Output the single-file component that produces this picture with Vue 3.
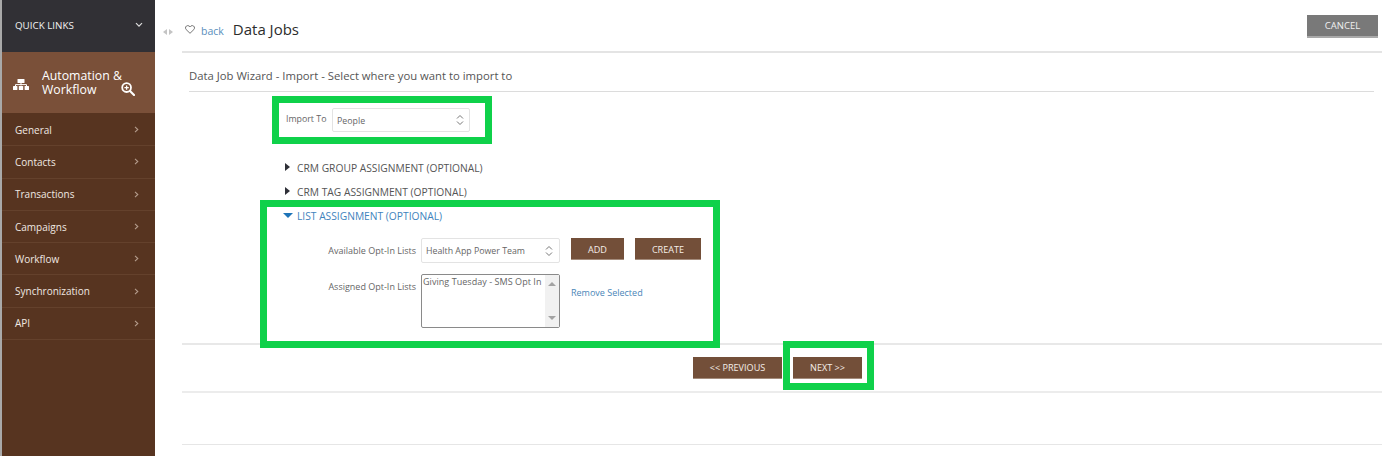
<script setup>
const menu = ['General', 'Contacts', 'Transactions', 'Campaigns', 'Workflow', 'Synchronization', 'API']
const closedSections = ['CRM GROUP ASSIGNMENT (OPTIONAL)', 'CRM TAG ASSIGNMENT (OPTIONAL)']
</script>

<template>
  <div class="page">
    <aside class="sidebar">
      <div class="quick">
        <span>QUICK LINKS</span>
        <svg class="chev-down" width="8" height="6" viewBox="0 0 8 6"><path d="M1 1.2 4 4.2 7 1.2" fill="none" stroke="#ddd" stroke-width="1.2"/></svg>
      </div>
      <div class="module">
        <svg class="org" width="16" height="11" viewBox="0 0 16 11">
          <rect x="4.5" y="0" width="7" height="4" rx=".6" fill="#fff"/>
          <path d="M8 4v2.5M2.5 7V5.6h11V7" fill="none" stroke="#fff" stroke-width="1"/>
          <rect x="0" y="7" width="4.4" height="4" rx=".6" fill="#fff"/>
          <rect x="5.8" y="7" width="4.4" height="4" rx=".6" fill="#fff"/>
          <rect x="11.6" y="7" width="4.4" height="4" rx=".6" fill="#fff"/>
        </svg>
        <span class="module-name">Automation &amp; Workflow</span>
        <svg class="zoom-ic" width="14" height="14" viewBox="0 0 14 14">
          <circle cx="5.6" cy="5.6" r="4.4" fill="none" stroke="#fff" stroke-width="1.8"/>
          <path d="M9 9 13 13" stroke="#fff" stroke-width="2.2" stroke-linecap="round"/>
          <path d="M3.4 5.6h4.4M5.6 3.4v4.4" stroke="#fff" stroke-width="1.3"/>
        </svg>
      </div>
      <nav class="menu">
        <div v-for="m in menu" :key="m" class="menu-item">
          <span>{{ m }}</span>
          <svg width="5" height="7" viewBox="0 0 5 7"><path d="M1 .8 3.8 3.5 1 6.2" fill="none" stroke="#b49c8c" stroke-width="1.1"/></svg>
        </div>
      </nav>
    </aside>

    <main class="main">
      <div class="toggle">
        <span class="tri-l"></span><span class="tri-r"></span>
      </div>
      <div class="content">
        <header class="head">
          <svg class="heart" width="10" height="9" viewBox="0 0 10 9"><path d="M5 8.3 1.1 4.5C-.3 3 .8.6 2.7.6 3.7.6 4.5 1.1 5 1.9 5.5 1.1 6.3.6 7.3.6c1.9 0 3 2.400 1.600 3.900Z" fill="none" stroke="#666" stroke-width=".9"/></svg>
          <a class="back">back</a>
          <h1>Data Jobs</h1>
          <button class="cancel">CANCEL</button>
        </header>

        <section class="wizard">
          <h2>Data Job Wizard - Import - Select where you want to import to</h2>
          <div class="import-row">
            <label>Import To</label>
            <div class="select import-select">
              <span>People</span>
              <svg width="8" height="12" viewBox="0 0 8 12"><path d="M1 4.500 4 1.500 7 4.500M1 7.500 4 10.500 7 7.500" fill="none" stroke="#777" stroke-width="1"/></svg>
            </div>
          </div>

          <div class="sections">
            <div v-for="s in closedSections" :key="s" class="sec-title">
              <span class="tri-closed"></span>{{ s }}
            </div>
            <div class="sec-title open">
              <span class="tri-open"></span>LIST ASSIGNMENT (OPTIONAL)
            </div>
            <div class="list-grid">
              <label>Available Opt-In Lists</label>
              <div class="select list-select">
                <span>Health App Power Team</span>
                <svg width="8" height="12" viewBox="0 0 8 12"><path d="M1 4.500 4 1.500 7 4.500M1 7.500 4 10.500 7 7.500" fill="none" stroke="#777" stroke-width="1"/></svg>
              </div>
              <div class="actions">
                <button class="btn add">ADD</button>
                <button class="btn create">CREATE</button>
              </div>
              <label class="assigned-label">Assigned Opt-In Lists</label>
              <div class="listbox">
                <div class="listbox-text">Giving Tuesday - SMS Opt In</div>
                <div class="scroll">
                  <span class="s-up"></span>
                  <span class="s-down"></span>
                </div>
              </div>
              <a class="remove">Remove Selected</a>
            </div>
          </div>
        </section>

        <div class="footer">
          <button class="btn prev">&lt;&lt; PREVIOUS</button>
          <button class="btn next">NEXT &gt;&gt;</button>
        </div>
        <div class="spacer"></div>
      </div>
    </main>

    <div class="mark mark-import"></div>
    <div class="mark mark-list"></div>
    <div class="mark mark-next"></div>
  </div>
</template>

<style>
html, body { margin: 0; background: #fff; overflow: hidden; }
</style>

<style scoped>
.page {
  position: relative;
  display: flex;
  width: 1391px;
  height: 456px;
  overflow: hidden;
  font-family: "Open Sans", "Liberation Sans", sans-serif;
  color: #555;
  background: #fff;
}
.sidebar {
  width: 153px;
  flex: none;
  border-left: 2px solid #a9a9a9;
  background: #573420;
  color: #efe6df;
}
.quick {
  height: 52px;
  display: flex;
  align-items: center;
  justify-content: space-between;
  padding: 0 12px 2px 13px;
  box-sizing: border-box;
  background: #313035;
  font-size: 9.800px;
  color: #f2f2f2;
}
.module {
  height: 61px;
  display: flex;
  align-items: center;
  background: #7a5039;
  color: #fff;
  padding-left: 11px;
  box-sizing: border-box;
  position: relative;
}
.org { flex: none; margin-top: 4px; }
.module-name {
  width: 90px;
  margin-left: 13px;
  font-size: 12.300px;
  line-height: 14.500px;
  margin-top: 1px;
}
.zoom-ic { position: absolute; left: 119px; top: 30px; }
.menu { padding-top: 1px; }
.menu-item {
  height: 32.300px;
  box-sizing: border-box;
  display: flex;
  align-items: center;
  justify-content: space-between;
  padding: 0 16px 0 13px;
  font-size: 10px;
  font-weight: 400;
  color: #f0e8e2;
  border-bottom: 1px solid #64412c;
}
.main { flex: 1; display: flex; min-width: 0; }
.toggle {
  width: 27px;
  flex: none;
  box-sizing: border-box;
  padding: 29px 0 0 8px;
  display: flex;
  gap: 2px;
  align-items: flex-start;
}
.tri-l, .tri-r {
  width: 0;
  height: 0;
  border-top: 3px solid transparent;
  border-bottom: 3px solid transparent;
}
.tri-l { border-right: 4px solid #c4c4c4; }
.tri-r { border-left: 4px solid #c4c4c4; }
.content { width: 1200px; flex: none; }
.head {
  height: 53px;
  box-sizing: border-box;
  display: flex;
  align-items: center;
  padding: 7px 4px 0 3px;
  border-bottom: 2px solid #e4e4e4;
}
.heart { flex: none; }
.back {
  margin-left: 6px;
  font-size: 10.500px;
  color: #5a8fbd;
  padding-top: 3px;
}
h1 {
  margin: 0 0 0 9px;
  font-size: 15px;
  font-weight: 500;
  color: #2c2c2c;
}
.cancel {
  margin-left: auto;
  margin-top: -6px;
  width: 71px;
  height: 23px;
  border: 0;
  border-bottom: 2px solid #a9a9a9;
  background: #797979;
  color: #f0f0f0;
  font: 9.500px "Open Sans", sans-serif;
  padding: 1px 0 0;
}
.wizard {
  padding: 0 8px 0 7px;
  height: 292px;
  box-sizing: border-box;
  border-bottom: 2px solid #e8e8e8;
}
h2 {
  margin: 0;
  height: 39px;
  box-sizing: border-box;
  padding-top: 15px;
  line-height: 16px;
  font-size: 11.300px;
  font-weight: 400;
  color: #555;
  border-bottom: 1px solid #dcdcdc;
}
.import-row {
  display: flex;
  align-items: center;
  margin: 16px 0 0 97px;
  font-size: 8.800px;
  color: #666;
}
.import-row label { width: 46px; margin-top: -2px; }
.select {
  box-sizing: border-box;
  display: flex;
  align-items: center;
  justify-content: space-between;
  border: 1px solid #e3e3e3;
  border-radius: 2px;
  font-size: 8.800px;
  color: #666;
  padding: 0 5px 0 4px;
}
.select span { padding-top: 1px; }
.import-select { width: 138px; height: 24px; }
.sections { margin: 24px 0 0 96px; }
.sec-title {
  position: relative;
  height: 24px;
  line-height: 24px;
  padding-left: 12px;
  font-size: 10.250px;
  color: #555;
}
.sec-title.open { color: #3f83bd; }
.tri-closed {
  position: absolute;
  left: 0;
  top: 7px;
  border-top: 4px solid transparent;
  border-bottom: 4px solid transparent;
  border-left: 5px solid #2f3038;
}
.tri-open {
  position: absolute;
  left: -2px;
  top: 9px;
  border-left: 5px solid transparent;
  border-right: 5px solid transparent;
  border-top: 5px solid #1e74b8;
}
.list-grid {
  display: grid;
  grid-template-columns: 136px 139px auto;
  grid-template-rows: 25px 54px;
  row-gap: 11px;
  margin-top: 10px;
  font-size: 9px;
  color: #666;
}
.list-grid label {
  text-align: right;
  padding-right: 5px;
  line-height: 26px;
}
.list-grid .assigned-label { line-height: 26px; }
.list-select { width: 139px; height: 25px; padding: 0 6px 0 4px; }
.actions { display: flex; gap: 11px; margin-left: 11px; }
.btn {
  border: 0;
  padding: 1px 0 0;
  background: #734f39;
  color: #f5eee9;
  font: 400 9.100px "Open Sans", sans-serif;
  height: 22px;
  border-bottom: 1px solid #a48c7c;
}
.add { width: 53px; }
.create { width: 66px; }
.listbox {
  box-sizing: border-box;
  display: flex;
  height: 54px;
  border: 1px solid #8a8a8a;
  border-radius: 2px;
  background: #fff;
}
.listbox-text {
  flex: 1;
  padding: 0 1px;
  line-height: 13px;
  font-size: 9px;
  letter-spacing: .05px;
  color: #666;
  white-space: nowrap;
}
.scroll {
  width: 14px;
  background: #f1f1f1;
  position: relative;
}
.s-up, .s-down {
  position: absolute;
  left: 3px;
  border-left: 4px solid transparent;
  border-right: 4px solid transparent;
}
.s-up { top: 7px; border-bottom: 4px solid #a3a3a3; }
.s-down { bottom: 7px; border-top: 4px solid #a3a3a3; }
.remove {
  margin: 12px 0 0 11px;
  color: #4a86b8;
  font-size: 9px;
}
.footer {
  height: 48px;
  box-sizing: border-box;
  display: flex;
  justify-content: center;
  gap: 11px;
  padding-top: 12px;
  padding-right: 9px;
  border-bottom: 2px solid #ececec;
}
.prev, .next { padding-top: 0; }
.prev { width: 89px; }
.next { width: 69px; }
.spacer { height: 52px; border-bottom: 1px solid #e6e6e6; box-sizing: border-box; }
.mark {
  position: absolute;
  box-sizing: border-box;
  border: 7px solid #0fd14a;
  pointer-events: none;
}
.mark-import { left: 272px; top: 96px; width: 220px; height: 48px; }
.mark-list { left: 260px; top: 200px; width: 460px; height: 148px; }
.mark-next { left: 783px; top: 341px; width: 91px; height: 49px; }
</style>
